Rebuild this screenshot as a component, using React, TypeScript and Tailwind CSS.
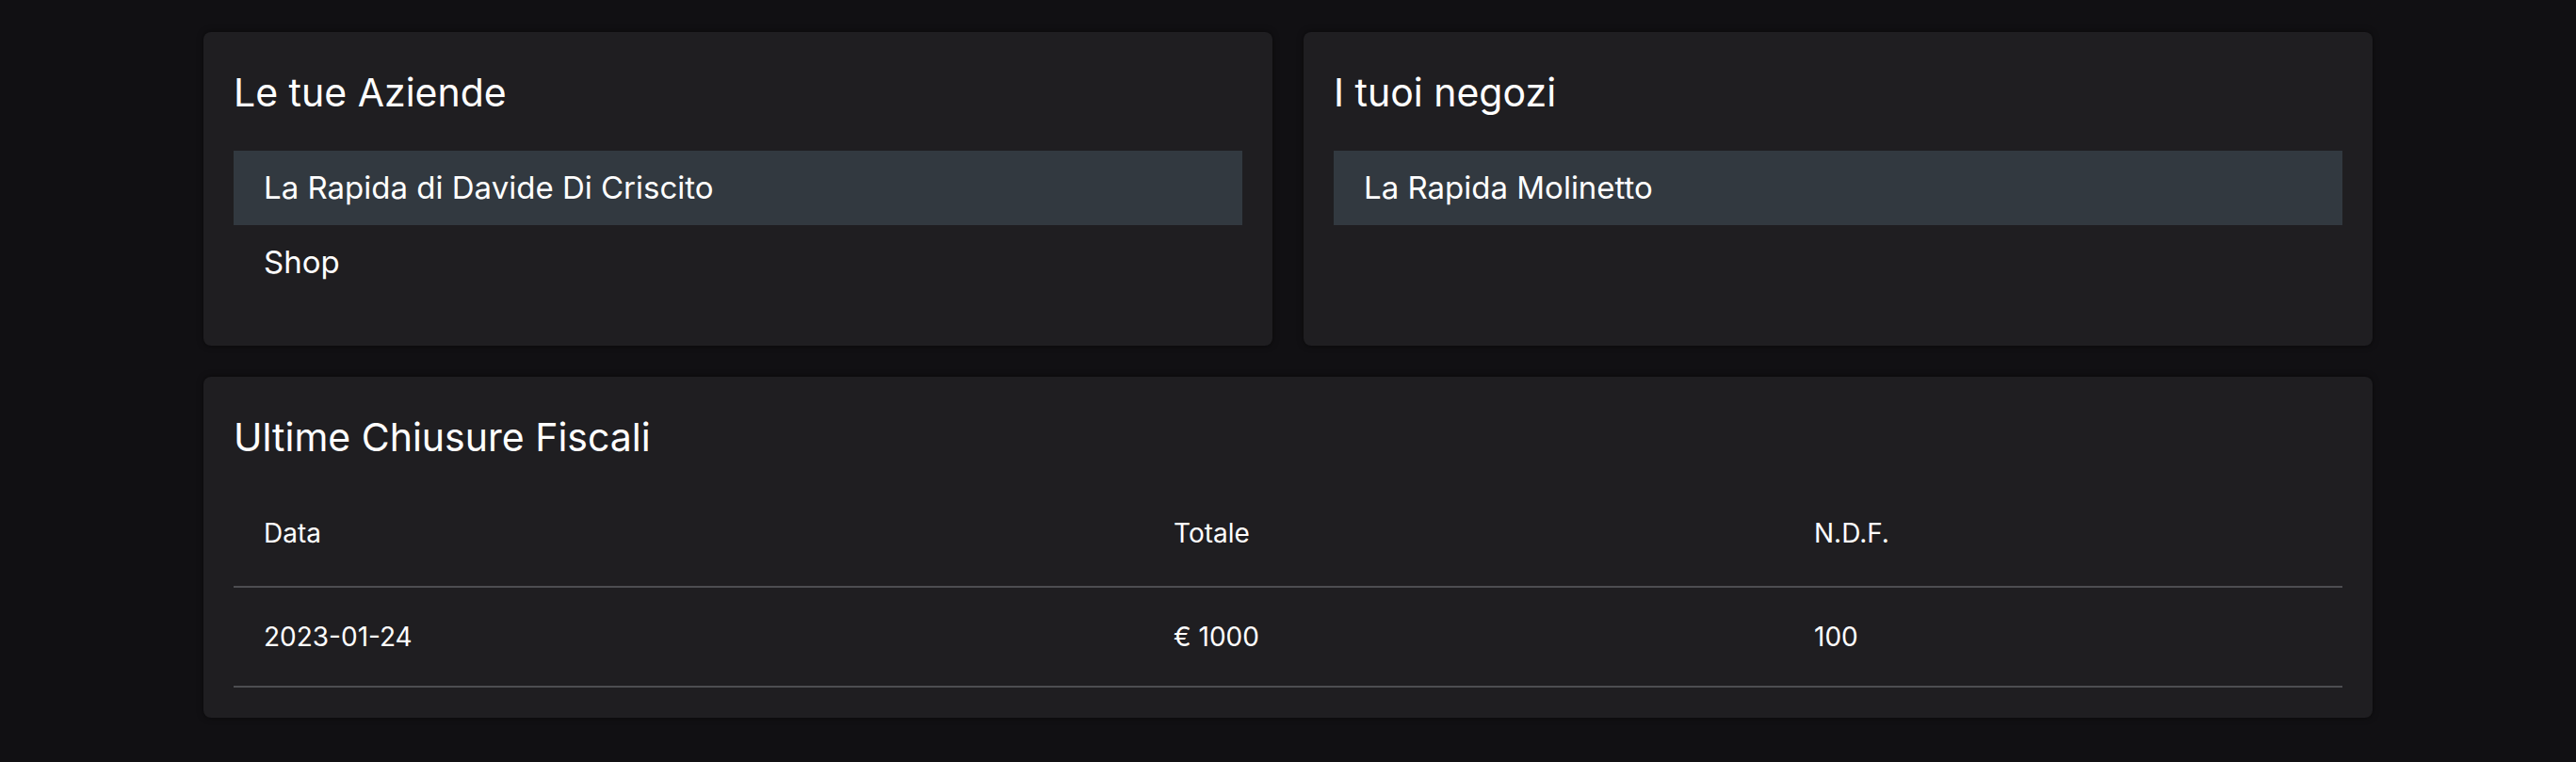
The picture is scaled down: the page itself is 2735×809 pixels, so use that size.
import type React from "react"

const aziende = ["La Rapida di Davide Di Criscito", "Shop"]
const negozi = ["La Rapida Molinetto"]

const chiusure = [{ data: "2023-01-24", totale: "€ 1000", ndf: "100" }]

function Card({ title, children }: { title: string; children: React.ReactNode }) {
  return (
    <div className="rounded-lg bg-[#1f1e21] p-8 shadow-[0_0_6px_rgba(0,0,0,0.5)]">
      <h2 className="text-[41px] font-normal leading-[64px]">{title}</h2>
      {children}
    </div>
  )
}

function List({ items }: { items: string[] }) {
  return (
    <ul className="mt-[30px] mb-[17px]">
      {items.map((item, i) => (
        <li
          key={item}
          className={`px-8 py-[15px] text-[33px] leading-[49px] ${i === 0 ? "bg-[#323940]" : ""}`}
        >
          {item}
        </li>
      ))}
    </ul>
  )
}

export default function App() {
  return (
    <div className="min-h-screen bg-[#111013] font-['Inter',sans-serif] text-white">
      <div className="mx-auto flex w-[2303px] flex-col gap-[33px] pt-[34px]">
        <div className="grid grid-cols-2 gap-[33px]">
          <Card title="Le tue Aziende">
            <List items={aziende} />
          </Card>
          <Card title="I tuoi negozi">
            <List items={negozi} />
          </Card>
        </div>

        <Card title="Ultime Chiusure Fiscali">
          <table className="mt-[17px] w-full table-fixed text-left text-[28px] leading-[42px]">
            <colgroup>
              <col className="w-[966px]" />
              <col className="w-[680px]" />
              <col />
            </colgroup>
            <thead>
              <tr className="border-b-2 border-[#4d4d51]">
                <th className="px-8 pt-[32px] pb-[35px] font-normal">Data</th>
                <th className="px-8 pt-[32px] pb-[35px] font-normal">Totale</th>
                <th className="px-8 pt-[32px] pb-[35px] font-normal">N.D.F.</th>
              </tr>
            </thead>
            <tbody>
              {chiusure.map((c) => (
                <tr key={c.data} className="border-b-2 border-[#4d4d51]">
                  <td className="px-8 py-[31px]">{c.data}</td>
                  <td className="px-8 py-[31px]">{c.totale}</td>
                  <td className="px-8 py-[31px]">{c.ndf}</td>
                </tr>
              ))}
            </tbody>
          </table>
        </Card>
      </div>
    </div>
  )
}
